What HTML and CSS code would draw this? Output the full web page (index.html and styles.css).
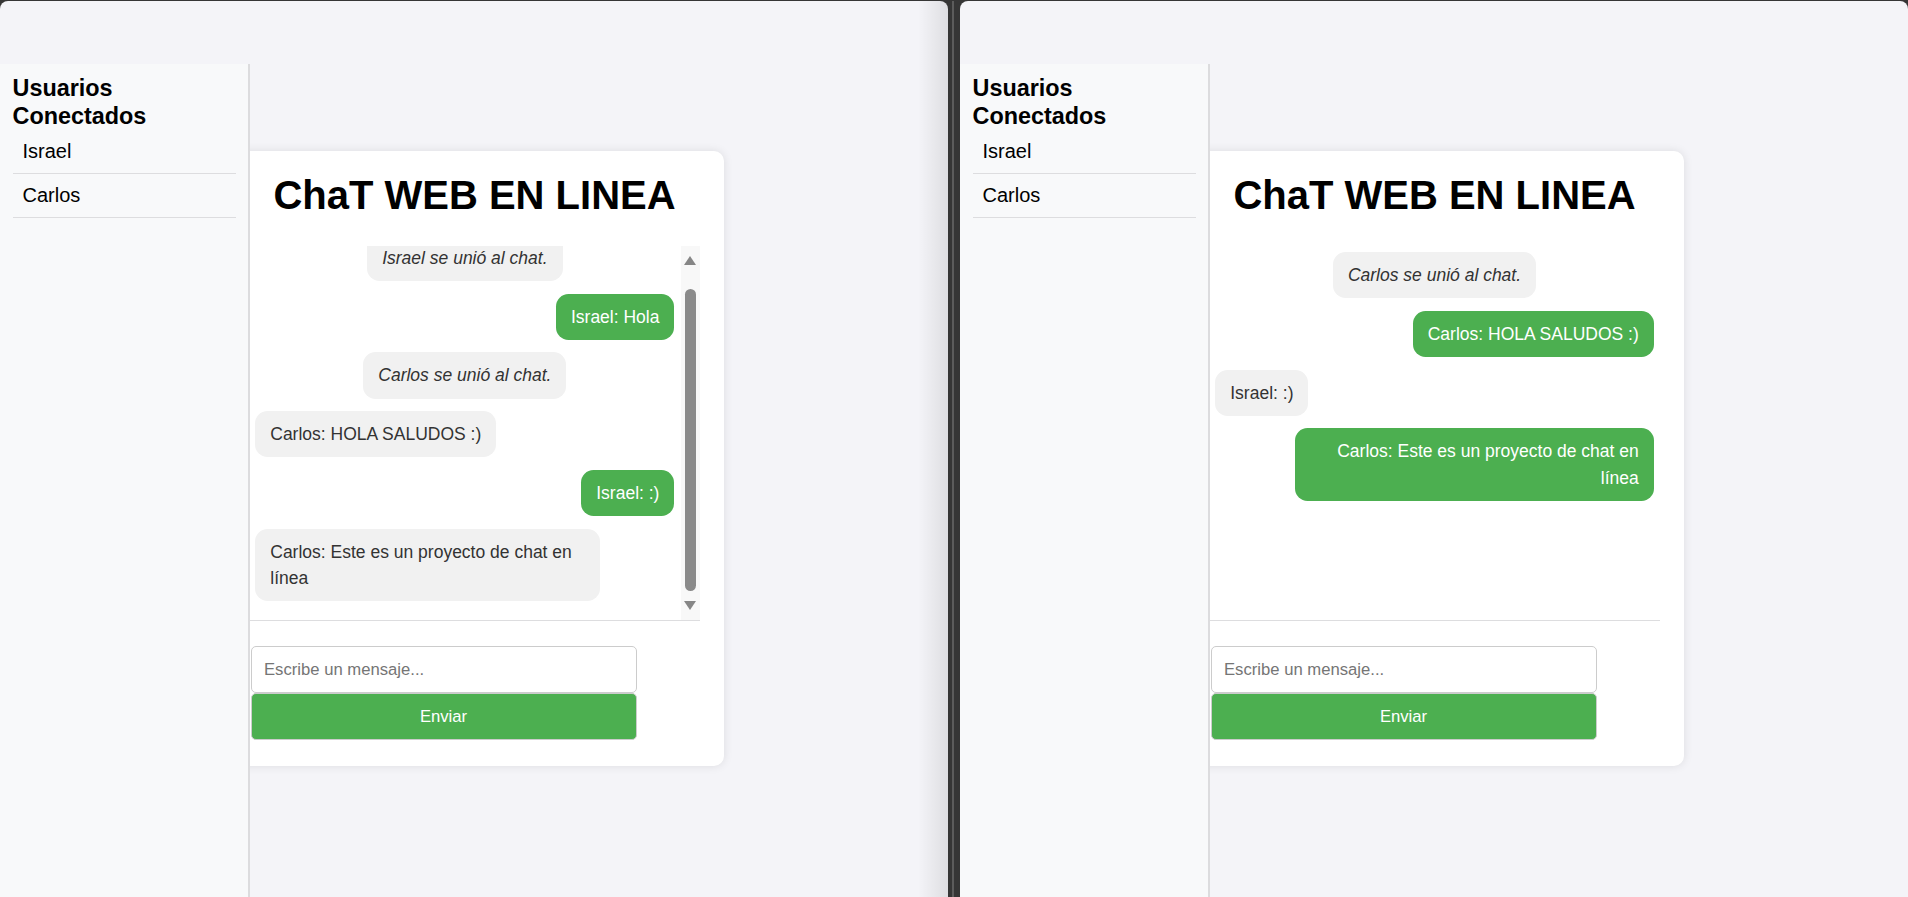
FILE: index.html
```html
<!DOCTYPE html>
<html lang="es">
<head>
<meta charset="utf-8">
<title>ChaT WEB EN LINEA</title>
<link rel="stylesheet" href="styles.css">
</head>
<body>
<div class="desktop">
  <section class="window window--back">
    <aside class="sidebar">
      <h3 class="sidebar-title">Usuarios Conectados</h3>
      <ul class="user-list">
        <li class="user-item">Israel</li>
        <li class="user-item">Carlos</li>
      </ul>
    </aside>
    <main class="stage">
      <div class="chat-card">
        <h1 class="chat-title">ChaT WEB EN LINEA</h1>
        <div class="messages">
          <div class="message-list message-list--scrolled">
            <div class="bubble bubble--system">Israel se unió al chat.</div>
            <div class="bubble bubble--own">Israel: Hola</div>
            <div class="bubble bubble--system">Carlos se unió al chat.</div>
            <div class="bubble">Carlos: HOLA SALUDOS :)</div>
            <div class="bubble bubble--own">Israel: :)</div>
            <div class="bubble">Carlos: Este es un proyecto de chat en línea</div>
          </div>
          <div class="scrollbar">
            <span class="scroll-arrow scroll-arrow--up"></span>
            <span class="scroll-thumb"></span>
            <span class="scroll-arrow scroll-arrow--down"></span>
          </div>
        </div>
        <form class="composer">
          <input class="composer-input" type="text" placeholder="Escribe un mensaje...">
          <button class="composer-send" type="button">Enviar</button>
        </form>
      </div>
    </main>
  </section>
  <div class="divider"></div>
  <section class="window">
    <aside class="sidebar">
      <h3 class="sidebar-title">Usuarios Conectados</h3>
      <ul class="user-list">
        <li class="user-item">Israel</li>
        <li class="user-item">Carlos</li>
      </ul>
    </aside>
    <main class="stage">
      <div class="chat-card">
        <h1 class="chat-title">ChaT WEB EN LINEA</h1>
        <div class="messages">
          <div class="message-list">
            <div class="bubble bubble--system">Carlos se unió al chat.</div>
            <div class="bubble bubble--own">Carlos: HOLA SALUDOS :)</div>
            <div class="bubble">Israel: :)</div>
            <div class="bubble bubble--own">Carlos: Este es un proyecto de chat en línea</div>
          </div>
        </div>
        <form class="composer">
          <input class="composer-input" type="text" placeholder="Escribe un mensaje...">
          <button class="composer-send" type="button">Enviar</button>
        </form>
      </div>
    </main>
  </section>
</div>
</body>
</html>
```
FILE: styles.css
```css
html, body {
  margin: 0;
  padding: 0;
}

body {
  background: #363636;
  font-family: "Liberation Sans", Arial, sans-serif;
  overflow: hidden;
}

.desktop {
  display: flex;
  height: 897px;
  padding-top: 1px;
  box-sizing: border-box;
}

.window {
  position: relative;
  flex-shrink: 0;
  width: 948px;
  height: 896px;
  background: #f4f4f8;
  border-radius: 8px 8px 0 0;
  overflow: hidden;
}

.window--back {
  background: linear-gradient(to left, rgba(0, 0, 0, 0.09), rgba(0, 0, 0, 0) 30px), #f4f4f8;
}

.divider {
  flex-shrink: 0;
  width: 12px;
  background: linear-gradient(to right, #363636 4px, #5c5c5c 4px, #5c5c5c 6px, #363636 6px);
}

/* Sidebar */
.sidebar {
  position: absolute;
  top: 63px;
  left: 0;
  bottom: 0;
  z-index: 2;
  width: 250px;
  box-sizing: border-box;
  padding: 11px 12.5px;
  background: #f8f9fa;
  border-right: 2px solid #dcdcde;
}

.sidebar-title {
  margin: 0;
  font-size: 23.4px;
  line-height: 27.5px;
  font-weight: bold;
  color: #000;
}

.user-list {
  list-style: none;
  margin: 0;
  padding: 0;
}

.user-item {
  padding: 10px;
  border-bottom: 1px solid #dddddf;
  font-size: 20px;
  color: #000;
}

/* Chat card */
.stage {
  display: flex;
  justify-content: center;
  padding-top: 150px;
}

.chat-card {
  width: 500px;
  box-sizing: border-box;
  padding: 21.4px 24px 25.5px 25px;
  background: #fff;
  border-radius: 10px;
  box-shadow: 0 0 10px rgba(0, 0, 0, 0.1);
}

.chat-title {
  margin: 0 0 27.6px;
  font-size: 40px;
  line-height: 46px;
  font-weight: bold;
  text-align: center;
  color: #000;
}

.messages {
  display: flex;
  height: 375px;
  box-sizing: border-box;
  border-bottom: 1px solid #dddddf;
}

.message-list {
  flex: 1;
  min-width: 0;
  display: flex;
  flex-direction: column;
  align-items: flex-start;
  padding: 6.25px;
  overflow: hidden;
}

.message-list--scrolled {
  justify-content: flex-end;
}

.bubble {
  flex-shrink: 0;
  max-width: 75%;
  margin-bottom: 12.5px;
  padding: 10px 15px;
  border-radius: 12.5px;
  background: #f1f1f1;
  color: #333;
  font-size: 17.5px;
  line-height: 1.5;
}

.bubble--own {
  align-self: flex-end;
  background: #4caf50;
  color: #fff;
  text-align: right;
}

.bubble--system {
  align-self: center;
  font-style: italic;
}

/* Fake scrollbar */
.scrollbar {
  flex-shrink: 0;
  width: 19.3px;
  display: flex;
  flex-direction: column;
  align-items: center;
  background: #f8f8f8;
}

.scroll-arrow {
  display: block;
  width: 0;
  height: 0;
  border-left: 6.5px solid transparent;
  border-right: 6.5px solid transparent;
}

.scroll-arrow--up {
  margin-top: 10.2px;
  border-bottom: 9px solid #868686;
}

.scroll-arrow--down {
  margin: 10.3px 0 9.5px;
  border-top: 9px solid #868686;
}

.scroll-thumb {
  display: block;
  flex: 1;
  width: 11px;
  margin-top: 23.8px;
  border-radius: 6px;
  background: #8a8a8a;
}

/* Composer */
.composer {
  display: flex;
  flex-direction: column;
  width: 386px;
  margin: 25px 0 0 1.5px;
}

.composer-input {
  box-sizing: border-box;
  height: 47.5px;
  margin: 0;
  padding: 0 12.5px;
  border: 1px solid #ccc;
  border-radius: 5px;
  background: #fff;
  font-family: "Liberation Sans", Arial, sans-serif;
  font-size: 16.67px;
  color: #000;
}

.composer-input::placeholder {
  color: #757575;
}

.composer-send {
  box-sizing: border-box;
  height: 47px;
  margin: 0;
  padding: 0;
  border: 1px solid #ccc;
  border-radius: 5px;
  background: #4caf50;
  color: #fff;
  font-family: "Liberation Sans", Arial, sans-serif;
  font-size: 16.67px;
}
```
